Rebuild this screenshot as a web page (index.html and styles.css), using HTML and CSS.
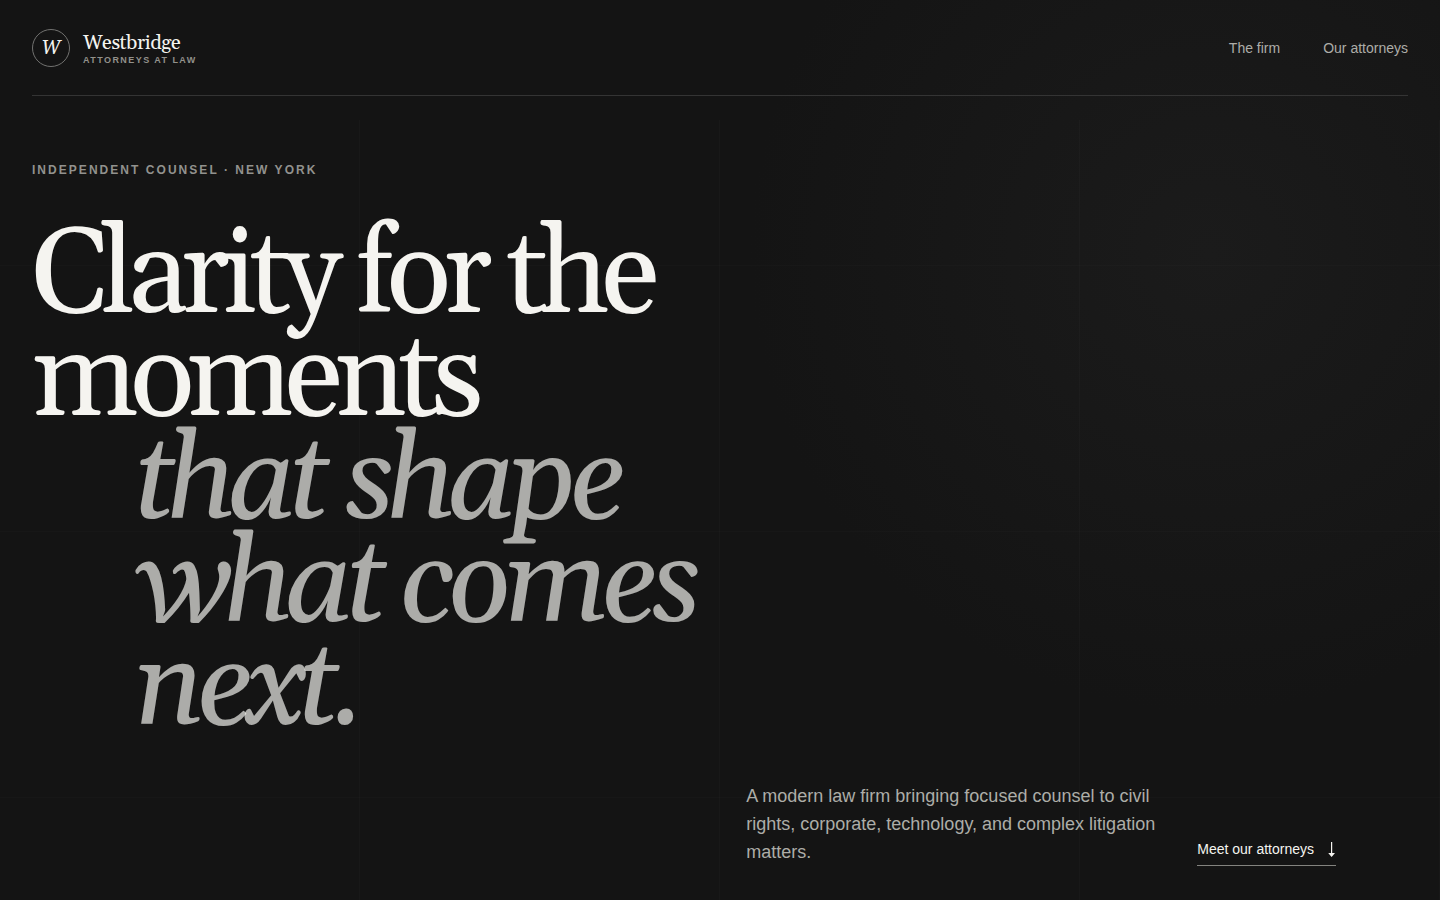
FILE: index.html
```
<!DOCTYPE html>
<html lang="en">
<head>
  <meta charset="UTF-8">
  <meta name="viewport" content="width=device-width, initial-scale=1.0">
  <title>Westbridge | Attorneys at Law</title>
  <link rel="stylesheet" href="styles.css">
</head>
<body>
  <div class="hero">
    <header class="site-header">
      <a class="brand" href="#">
        <span class="brand-mark">W</span>
        <span class="brand-text">
          <span class="brand-name">Westbridge</span>
          <span class="brand-tag">Attorneys at Law</span>
        </span>
      </a>
      <nav class="site-nav">
        <a href="#firm">The firm</a>
        <a href="#attorneys">Our attorneys</a>
      </nav>
    </header>

    <main class="hero-content">
      <p class="eyebrow">Independent counsel · New York</p>
      <h1>Clarity for the moments <em>that shape what comes next.</em></h1>
      <div class="hero-bottom">
        <p class="intro">A modern law firm bringing focused counsel to civil rights, corporate, technology, and complex litigation matters.</p>
        <a class="text-link" href="#attorneys">
          Meet our attorneys
          <svg class="arrow" width="9" height="16" viewBox="0 0 9 16" aria-hidden="true">
            <path d="M4 1h1.2v11H8L4.6 16 1.2 12H4z" fill="currentColor"/>
          </svg>
        </a>
      </div>
    </main>
  </div>
</body>
</html>
```
FILE: styles.css
```
* {
  box-sizing: border-box;
}
body {
  margin: 0;
  background: #141414;
  color: #f5f4f0;
  font-family: Arial, "Liberation Sans", sans-serif;
}
a {
  color: inherit;
  text-decoration: none;
}
.hero {
  min-height: 100vh;
  padding: 0 32px;
  display: flex;
  flex-direction: column;
  /* faint rules below the header, soft glow on the right */
  background:
    linear-gradient(90deg, transparent calc(100% - 1px), rgba(255,255,255,0.014) 0) 0 120px / 25% calc(100% - 120px) repeat-x,
    linear-gradient(transparent calc(100% - 1px), rgba(255,255,255,0.012) 0) 0 0 / 100% 266px,
    radial-gradient(circle at 84% 28%, #1b1b1b, #141414 460px);
}
.site-header {
  display: flex;
  justify-content: space-between;
  align-items: center;
  height: 96px;
  border-bottom: 1px solid #343434;
}
.brand {
  display: flex;
  align-items: center;
  gap: 13px;
}
.brand-mark {
  display: grid;
  place-items: center;
  width: 38px;
  height: 38px;
  border: 1px solid #727270;
  border-radius: 50%;
  font: italic 19px/20px Georgia, Gelasio, serif;
}
.brand-text {
  display: grid;
  gap: 2px;
  padding-top: 3px;
}
.brand-name {
  font: 20px/20px Georgia, Gelasio, serif;
  letter-spacing: -0.02em;
}
.brand-tag {
  color: #92918b;
  font-size: 9px;
  line-height: 10px;
  font-weight: bold;
  letter-spacing: 0.16em;
  text-transform: uppercase;
}
.site-nav {
  display: flex;
  gap: 43px;
  color: #adada8;
  font-size: 14px;
}
.hero-content {
  flex: 1;
  display: flex;
  flex-direction: column;
  padding: 66px 0 34px;
}
.eyebrow {
  margin: 0;
  color: #92928e;
  font-size: 12px;
  line-height: 16px;
  font-weight: bold;
  letter-spacing: 0.17em;
  text-transform: uppercase;
}
h1 {
  max-width: 700px;
  margin: 48px 0 0;
  font: 120px/103px Georgia, Gelasio, serif;
  letter-spacing: -0.065em;
}
h1 em {
  display: block;
  padding-left: 102px;
  color: rgba(245,244,240,0.68);
}
.hero-bottom {
  display: grid;
  grid-template-columns: 409px auto;
  justify-content: end;
  align-items: end;
  gap: 42px;
  margin-top: auto;
  padding-right: 72px;
}
.intro {
  margin: 0;
  color: #adada8;
  font-size: 18px;
  line-height: 28px;
}
.text-link {
  display: flex;
  align-items: center;
  gap: 13px;
  padding-bottom: 8px;
  border-bottom: 1px solid #83837f;
  font-size: 14px;
  line-height: 16px;
}
```
